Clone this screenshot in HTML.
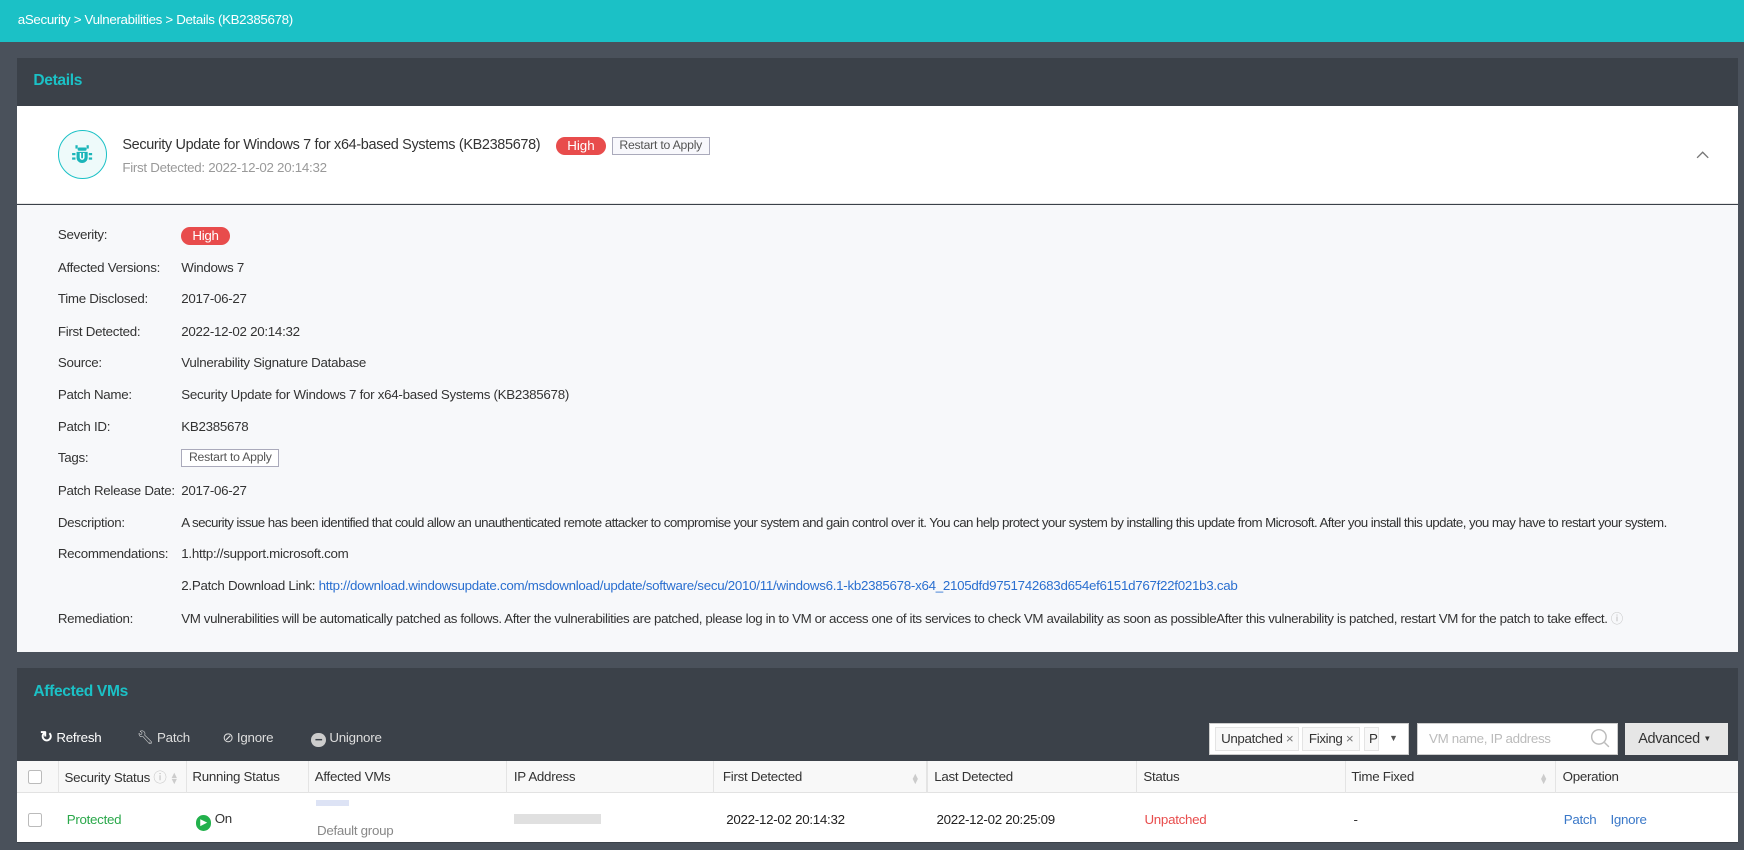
<!DOCTYPE html>
<html><head><meta charset="utf-8"><style>
html{zoom:1.1122}
*{box-sizing:border-box;margin:0;padding:0}
body{width:1568px;height:764px;overflow:hidden;background:#4a515b;font-family:"Liberation Sans",Arial,sans-serif;font-size:12px;color:#333;position:relative}
.a{position:absolute}
.top{left:0;top:0;width:1568px;height:38px;background:#1bc1c6;color:#fff;font-size:12px;line-height:36px;padding-left:16px;letter-spacing:-0.3px}
.panel{left:15px;width:1548px;background:#3b4149}
.ttl{color:#1bc1c6;font-weight:bold;font-size:14px;position:absolute;left:15px;letter-spacing:-0.3px}
.badge{display:inline-block;background:#e84c4c;color:#fff;border-radius:8px;height:16px;line-height:16px;padding:0 10px;font-size:12px}
.tag{display:inline-block;border:1px solid #aab;background:#f8f8fc;color:#555;height:16px;line-height:14px;padding:0 6px;font-size:11px;letter-spacing:-0.2px}
.row{position:absolute;left:52px;letter-spacing:-0.25px;line-height:14px}
.row>b{font-weight:normal;position:absolute;left:0;white-space:nowrap}
.row>span{position:absolute;left:111px;white-space:nowrap}
a{color:#2a6fd0;text-decoration:none}
.th,.td{position:absolute;white-space:nowrap;letter-spacing:-0.25px}
.sep{position:absolute;top:684px;height:29px;width:1px;background:#e4e4e4}
.tb{position:absolute;top:656px;color:#ddd;font-size:12px;letter-spacing:-0.2px;line-height:14px}
.srt{color:#ccc;font-size:8px;line-height:5px;display:inline-block;vertical-align:middle}
</style></head><body>
<div class="a top">aSecurity &gt; Vulnerabilities &gt; Details (KB2385678)</div>
<div class="a panel" style="top:52px;height:534px">
<div class="ttl" style="top:13px">Details</div>
</div>
<div class="a" style="left:15px;top:95px;width:1548px;height:88px;background:#fff;border-bottom:1px solid #e6e6e6"></div>
<div class="a" style="left:52px;top:117px;width:44px;height:44px;border:1px solid #1bc1c6;border-radius:50%;background:#eefafa"></div>
<svg class="a" style="left:64px;top:129px" width="20" height="20" viewBox="0 0 20 20"><g fill="#1bb5b9"><rect x="6" y="4" width="8" height="3" rx="1"/><path d="M5 8h10v5a5 5 0 0 1-10 0z"/><rect x="1" y="9" width="3" height="2"/><rect x="16" y="9" width="3" height="2"/><rect x="1" y="13" width="3" height="2"/><rect x="16" y="13" width="3" height="2"/><rect x="4" y="2" width="2" height="3"/><rect x="14" y="2" width="2" height="3"/></g><path d="M8.5 9v4a1.5 1.5 0 0 0 3 0V9" stroke="#fff" stroke-width="1.3" fill="none"/></svg>
<div class="a" style="left:110px;top:123px;font-size:13px;color:#333;letter-spacing:-0.3px">Security Update for Windows 7 for x64-based Systems (KB2385678)</div>
<div class="a" style="left:500px;top:123px"><span class="badge">High</span></div>
<div class="a" style="left:550px;top:123px"><span class="tag">Restart to Apply</span></div>
<div class="a" style="left:110px;top:144px;color:#999;letter-spacing:-0.25px">First Detected: 2022-12-02 20:14:32</div>
<svg class="a" style="left:1525px;top:135px" width="12" height="8"><path d="M1 7l5-5 5 5" stroke="#777" fill="none" stroke-width="1.2"/></svg>
<div class="a" style="left:15px;top:184px;width:1548px;height:402px;background:#f7f8fa"></div>
<div class="row" style="top:204px"><b>Severity:</b><span><span class="badge">High</span></span></div>
<div class="row" style="top:234px"><b>Affected Versions:</b><span>Windows 7</span></div>
<div class="row" style="top:262px"><b>Time Disclosed:</b><span>2017-06-27</span></div>
<div class="row" style="top:291px"><b>First Detected:</b><span>2022-12-02 20:14:32</span></div>
<div class="row" style="top:319px"><b>Source:</b><span>Vulnerability Signature Database</span></div>
<div class="row" style="top:348px"><b>Patch Name:</b><span>Security Update for Windows 7 for x64-based Systems (KB2385678)</span></div>
<div class="row" style="top:377px"><b>Patch ID:</b><span>KB2385678</span></div>
<div class="row" style="top:405px"><b>Tags:</b><span style="top:-1px"><span class="tag" style="background:#fff">Restart to Apply</span></span></div>
<div class="row" style="top:434px"><b>Patch Release Date:</b><span>2017-06-27</span></div>
<div class="row" style="top:463px;letter-spacing:-0.52px"><b style="letter-spacing:-0.25px">Description:</b><span>A security issue has been identified that could allow an unauthenticated remote attacker to compromise your system and gain control over it. You can help protect your system by installing this update from Microsoft. After you install this update, you may have to restart your system.</span></div>
<div class="row" style="top:491px"><b>Recommendations:</b><span>1.http://support.microsoft.com</span></div>
<div class="row" style="top:520px"><span>2.Patch Download Link: <a>http://download.windowsupdate.com/msdownload/update/software/secu/2010/11/windows6.1-kb2385678-x64_2105dfd9751742683d654ef6151d767f22f021b3.cab</a></span></div>
<div class="row" style="top:549px;letter-spacing:-0.35px"><b style="letter-spacing:-0.25px">Remediation:</b><span>VM vulnerabilities will be automatically patched as follows. After the vulnerabilities are patched, please log in to VM or access one of its services to check VM availability as soon as possibleAfter this vulnerability is patched, restart VM for the patch to take effect. <span style="color:#bbb;font-size:11px">ⓘ</span></span></div>

<div class="a panel" style="top:601px;height:157px">
<div class="ttl" style="top:13px">Affected VMs</div>
</div>
<div class="tb" style="left:36px;color:#fff"><b style="font-size:14px">↻</b> Refresh</div>
<div class="tb" style="left:123px">🔧︎ Patch</div>
<div class="tb" style="left:200px">⊘ Ignore</div>
<div class="tb" style="left:280px"><span style="display:inline-block;width:13px;height:13px;border-radius:50%;background:#ccc;vertical-align:-2px;text-align:center;line-height:12px;color:#3b4149;font-weight:bold">−</span> Unignore</div>
<div class="a" style="left:1087px;top:650px;width:180px;height:29px;background:#fff;border:1px solid #ccc"></div>
<div class="a" style="left:1092px;top:654px;width:76px;height:21px;border:1px solid #e4e4e4;background:#f8f8f8;line-height:19px;padding-left:5px;letter-spacing:-0.3px;white-space:nowrap">Unpatched <span style="color:#777">×</span></div>
<div class="a" style="left:1171px;top:654px;width:52px;height:21px;border:1px solid #e4e4e4;background:#f8f8f8;line-height:19px;padding-left:5px;letter-spacing:-0.3px;white-space:nowrap">Fixing <span style="color:#777">×</span></div>
<div class="a" style="left:1226px;top:654px;width:14px;height:21px;border:1px solid #e4e4e4;background:#f8f8f8;line-height:19px;padding-left:4px;overflow:hidden">Pa</div>
<div class="a" style="left:1249px;top:659px;font-size:8px;color:#555">▼</div>
<div class="a" style="left:1274px;top:650px;width:181px;height:29px;background:#fff;border:1px solid #ccc;color:#bbb;line-height:27px;padding-left:10px;letter-spacing:-0.3px">VM name, IP address</div>
<svg class="a" style="left:1430px;top:655px" width="18" height="18"><circle cx="8" cy="8" r="6.5" stroke="#bbb" fill="none" stroke-width="1.3"/><path d="M13 13l4 4" stroke="#bbb" stroke-width="1.3"/></svg>
<div class="a" style="left:1461px;top:650px;width:93px;height:29px;background:#e6e6e6;color:#333;font-size:13px;line-height:29px;padding-left:12px;letter-spacing:-0.3px">Advanced <span style="font-size:7px;vertical-align:2px">▼</span></div>

<div class="a" style="left:15px;top:684px;width:1548px;height:29px;background:#f8f8f8;border-bottom:1px solid #e2e2e2"></div>
<div class="a" style="left:15px;top:713px;width:1548px;height:44px;background:#fff"></div>
<div class="sep" style="left:52px"></div><div class="sep" style="left:167px"></div><div class="sep" style="left:277px"></div><div class="sep" style="left:455px"></div><div class="sep" style="left:641px"></div><div class="sep" style="left:833px"></div><div class="sep" style="left:1021px"></div><div class="sep" style="left:1209px"></div><div class="sep" style="left:1398px"></div>
<div class="a" style="left:25px;top:692px;width:13px;height:13px;border:1px solid #bbb;background:#fff;border-radius:2px"></div>
<div class="a" style="left:25px;top:731px;width:13px;height:13px;border:1px solid #bbb;background:#fff;border-radius:2px"></div>
<div class="th" style="left:58px;top:690px">Security Status <span style="color:#bbb">ⓘ</span> <span class="srt">▲<br>▼</span></div>
<div class="th" style="left:173px;top:691px">Running Status</div>
<div class="th" style="left:283px;top:691px">Affected VMs</div>
<div class="th" style="left:462px;top:691px">IP Address</div>
<div class="th" style="left:650px;top:691px">First Detected</div>
<div class="th" style="left:819px;top:693px"><span class="srt">▲<br>▼</span></div>
<div class="th" style="left:840px;top:691px">Last Detected</div>
<div class="th" style="left:1028px;top:691px">Status</div>
<div class="th" style="left:1215px;top:691px">Time Fixed</div>
<div class="th" style="left:1384px;top:693px"><span class="srt">▲<br>▼</span></div>
<div class="th" style="left:1405px;top:691px">Operation</div>
<div class="td" style="left:60px;top:730px;color:#2aa84a">Protected</div>
<div class="td" style="left:176px;top:729px"><span style="display:inline-block;width:14px;height:14px;border-radius:50%;background:#22b14c;color:#fff;font-size:8px;text-align:center;line-height:14px;vertical-align:-2px">▶</span> On</div>
<div class="a" style="left:284px;top:719px;width:30px;height:6px;background:#dde3f5"></div>
<div class="td" style="left:285px;top:740px;color:#888">Default group</div>
<div class="a" style="left:462px;top:732px;width:78px;height:9px;background:#e0e0e0"></div>
<div class="td" style="left:653px;top:730px;color:#222">2022-12-02 20:14:32</div>
<div class="td" style="left:842px;top:730px;color:#222">2022-12-02 20:25:09</div>
<div class="td" style="left:1029px;top:730px;color:#e84c4c">Unpatched</div>
<div class="td" style="left:1217px;top:730px">-</div>
<div class="td" style="left:1406px;top:730px;color:#3a78c8">Patch</div>
<div class="td" style="left:1448px;top:730px;color:#3a78c8">Ignore</div>
</body></html>
